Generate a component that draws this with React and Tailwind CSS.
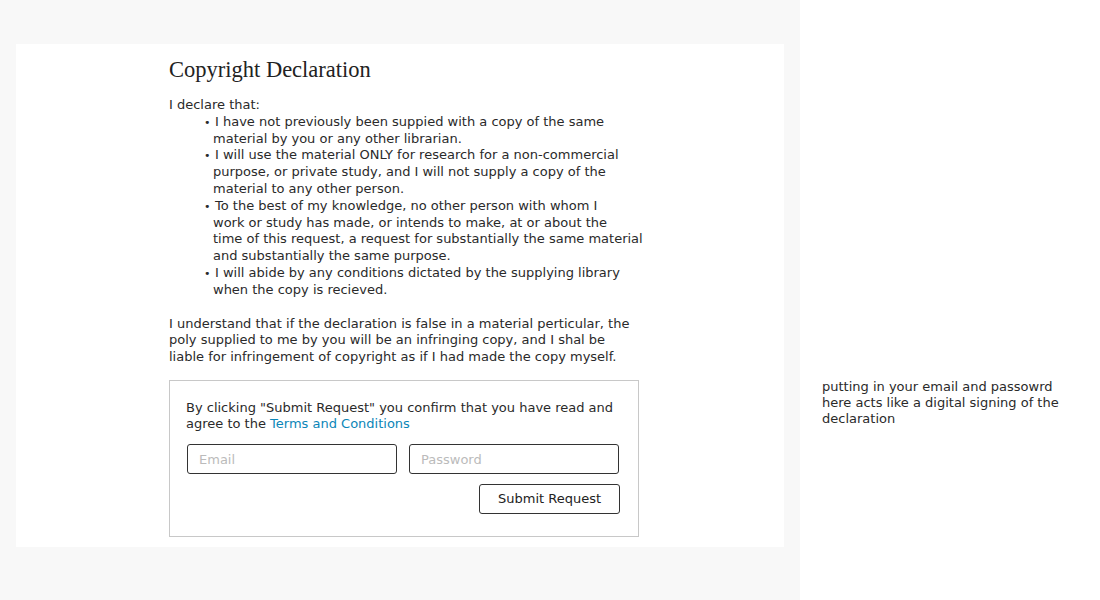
import React from "react";

const items = [
  ["I have not previously been suppied with a copy of the same", "material by you or any other librarian."],
  [
    "I will use the material ONLY for research for a non-commercial",
    "purpose, or private study, and I will not supply a copy of the",
    "material to any other person.",
  ],
  [
    "To the best of my knowledge, no other person with whom I",
    "work or study has made, or intends to make, at or about the",
    "time of this request, a request for substantially the same material",
    "and substantially the same purpose.",
  ],
  ["I will abide by any conditions dictated by the supplying library", "when the copy is recieved."],
];

function Lines({ lines }) {
  return lines.map((line, i) => (
    <React.Fragment key={i}>
      {i > 0 && <br />}
      {line}
    </React.Fragment>
  ));
}

function Declaration() {
  return (
    <div className="bg-white mt-[44px] mx-4 pl-[153px] pt-[13px] h-[503px]">
      <h1 className="font-['Liberation_Serif',serif] text-[22.5px] leading-[26px] text-[#222]">
        Copyright Declaration
      </h1>
      <div className="mt-[14px] w-[470px] text-[13px] leading-[16.8px] text-[#2a2a2a] whitespace-nowrap">
        <p>I declare that:</p>
        <ul className="pl-[44px]">
          {items.map((lines, i) => (
            <li key={i}>
              <span className="inline-block w-[11px] -ml-[9px] text-[11px] leading-none">•</span>
              <Lines lines={lines} />
            </li>
          ))}
        </ul>
        <p className="mt-[17px] leading-[16.5px]">
          <Lines
            lines={[
              "I understand that if the declaration is false in a material perticular, the",
              "poly supplied to me by you will be an infringing copy, and I shal be",
              "liable for infringement of copyright as if I had made the copy myself.",
            ]}
          />
        </p>
      </div>
      <div className="mt-[15px] w-[470px] border border-[#c8c8c8] pl-[16px] pr-[18px] pt-[19px] pb-[22px] text-[13px] leading-[16px] text-[#2a2a2a]">
        <p className="whitespace-nowrap">
          By clicking "Submit Request" you confirm that you have read and
          <br />
          agree to the <span className="text-[#0b86b8]">Terms and Conditions</span>
        </p>
        <div className="mt-[12px] ml-px flex gap-[12px]">
          <input
            type="text"
            placeholder="Email"
            className="w-[210px] h-[30px] border border-[#333] rounded-[3px] px-[11px] text-[13px] placeholder:text-[#bbb] outline-none"
          />
          <input
            type="password"
            placeholder="Password"
            className="w-[210px] h-[30px] border border-[#333] rounded-[3px] px-[11px] text-[13px] placeholder:text-[#bbb] outline-none"
          />
        </div>
        <div className="mt-[10px] flex justify-end">
          <button className="w-[141px] h-[30px] border border-[#333] rounded-[3px] text-[13px] text-[#222] bg-white">
            Submit Request
          </button>
        </div>
      </div>
    </div>
  );
}

export default function App() {
  return (
    <div className="flex w-[1100px] h-[600px] bg-white font-['DejaVu_Sans',Verdana,sans-serif]">
      <div className="w-[800px] h-[600px] bg-[#f8f8f8]">
        <Declaration />
      </div>
      <div className="pl-[22px] pt-[379px] text-[13px] leading-[16px] text-[#2a2a2a] whitespace-nowrap">
        <p>
          putting in your email and passowrd
          <br />
          here acts like a digital signing of the
          <br />
          declaration
        </p>
      </div>
    </div>
  );
}
